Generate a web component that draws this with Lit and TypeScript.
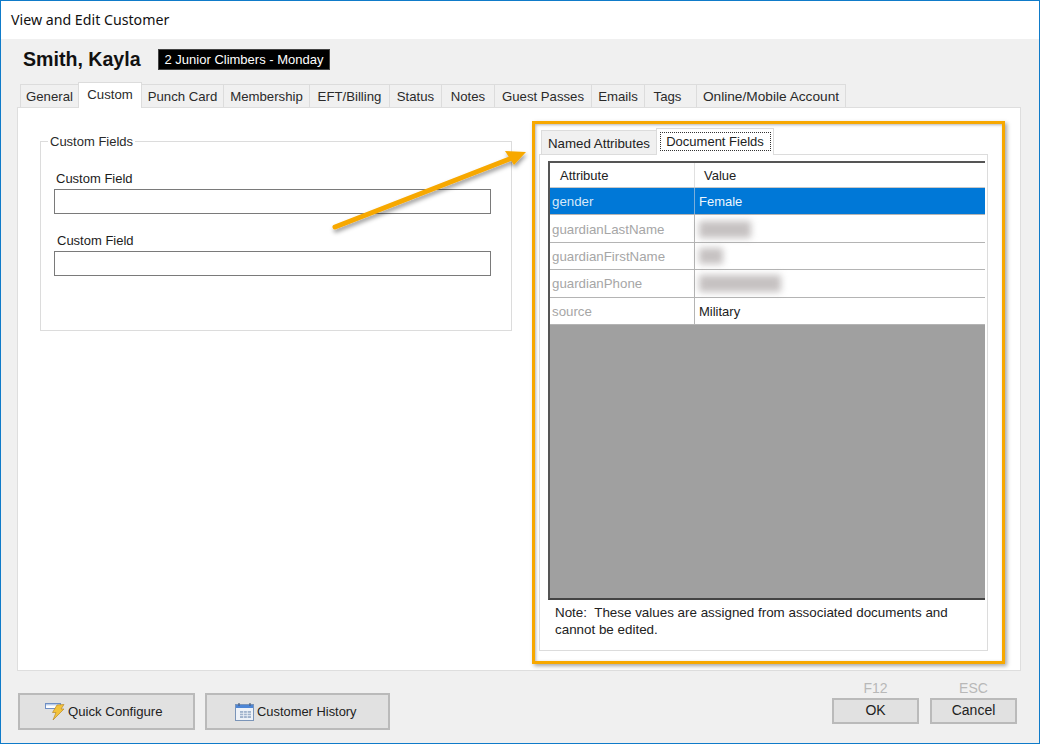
import { LitElement, html, css, svg } from "lit";
import { customElement } from "lit/decorators.js";

const TABS: [string, number][] = [
  ["General", 59], ["Custom", 63], ["Punch Card", 82], ["Membership", 86], ["EFT/Billing", 80],
  ["Status", 52], ["Notes", 53], ["Guest Passes", 97], ["Emails", 53], ["Tags", 52], ["Online/Mobile Account", 149],
];

const ROWS = [
  { a: "guardianLastName", w: 52, h: 17 },
  { a: "guardianFirstName", w: 24, h: 16 },
  { a: "guardianPhone", w: 82, h: 17 },
];

@customElement("app-root")
export class AppRoot extends LitElement {
  static styles = css`
    :host {
      display: block; position: relative; box-sizing: border-box; width: 1040px; height: 744px;
      border: 1px solid #0f7bc9; background: #f0f0f0; overflow: hidden;
      font-family: "Liberation Sans", Arial, sans-serif; font-size: 13px; color: #1c1c1c;
    }
    .title { height: 38px; background: #fff; display: flex; align-items: center; padding: 0 0 2px 10px; box-sizing: border-box;
      font-family: "Noto Sans", "Open Sans", sans-serif; font-size: 14.2px; color: #111; }
    .head { height: 45px; display: flex; align-items: center; padding: 0 0 4px 22px; box-sizing: border-box; }
    .name { font-size: 19.6px; font-weight: 700; color: #111; width: 135px; }
    .badge { background: #000; color: #fff; height: 21px; width: 172px; display: flex; align-items: center;
      justify-content: center; font-size: 13px; box-sizing: border-box; border: 1px solid #444; }
    .tabs { display: flex; height: 23px; margin-left: 19px; align-items: flex-end; }
    .tab { height: 23px; box-sizing: border-box; background: #f0f0f0; border: 1px solid #dcdcdc; border-bottom: 0; border-left-width: 0;
      display: flex; align-items: center; justify-content: center; font-size: 13.2px; color: #2a2a2a; }
    .tab:first-child { border-left-width: 1px; }
    .tab:nth-child(10) { padding-right: 6px; }
    .tab:nth-child(11) { font-size: 13.7px; }
    .tab.on { background: #fff; margin-bottom: -1px; height: 26px; position: relative; z-index: 1; padding: 0 0 3px; border-left-width: 1px; margin-left: -1px; }
    .panel { margin-left: 16px; width: 1004px; height: 564px; box-sizing: border-box; background: #fff; border: 1px solid #dedede;
      display: flex; padding: 33px 0 0 22px; }
    .group { width: 472px; height: 190px; box-sizing: border-box; border: 1px solid #dcdcdc; padding: 0 20px 0 13px; flex: none; }
    .legend { display: inline-block; background: #fff; margin: -9px 0 0 -6px; padding: 0 2px; line-height: 17px; height: 17px; vertical-align: top; color: #2a2a2a; }
    .field-label { line-height: 17px; margin: 13px 0 2px 2px; }
    .field { height: 25px; box-sizing: border-box; border: 1px solid #7a7a7a; background: #fff; }
    .field + .field-label { margin-top: 18px; margin-left: 3px; }
    .doc { width: 449px; height: 530px; margin: -13px 0 0 27px; flex: none; }
    .subtabs { display: flex; height: 26px; margin-left: 2px; align-items: flex-end; }
    .sub { height: 24px; box-sizing: border-box; border: 1px solid #dcdcdc; border-bottom: 0; background: #f0f0f0; display: flex; align-items: center; justify-content: center; width: 116px; color: #222; font-size: 13.3px; padding-top: 2px; }
    .sub.on { height: 27px; background: #fff; margin-bottom: -1px; width: 118px; margin-left: -1px; position: relative; z-index: 1; padding: 3px 0 0; align-items: flex-start; font-size: 13px; }
    .focus { border: 1px dotted #333; height: 19px; line-height: 17px; width: 111px; text-align: center; white-space: nowrap; box-sizing: border-box; }
    .subpanel { height: 497px; box-sizing: border-box; border: 1px solid #dcdcdc; background: #fff; padding: 6px 2px 0 8px; }
    .grid { height: 439px; box-sizing: border-box; border-top: 2px solid #555; border-left: 2px solid #555; border-bottom: 2px solid #444; background: #a0a0a0; }
    .row { display: grid; grid-template-columns: 145px 1fr; background: #fff; height: 27.4px; box-sizing: border-box; border-bottom: 1px solid #b4b4b4; align-items: center; }
    .row > div { height: 100%; box-sizing: border-box; display: flex; align-items: center; padding: 1px 0 0 4px; }
    .row > div:first-child { border-right: 1px solid #b4b4b4; color: #a6a6a6; padding-left: 2px; font-size: 13.3px; }
    .row.hd { height: 25px; border-bottom: 1px solid #c8c8c8; }
    .row.hd > div { color: #222; padding: 0 0 0 10px; border-right: 1px solid #e0e0e0; font-size: 13px; }
    .row.hd > div:last-child { border: 0; padding-left: 9px; }
    .row.sel { background: #0078d7; }
    .row.sel > div { color: #eef6fd; padding-top: 0; }
    .row.sel > div:first-child { color: #d8e9f8; border-right-color: #7aaedb; }
    .blur { background: #8d8585; filter: blur(3.5px); opacity: .5; }
    .note { margin: 4px 0 0 7px; line-height: 17px; color: #222; width: 420px; white-space: pre-wrap; font-size: 13.4px; }
    .foot { display: flex; padding: 0 22px 0 17px; height: 72px; box-sizing: border-box; }
    .btn { box-sizing: border-box; border: 2px solid #bababa; background: #e1e1e1; display: flex; align-items: center; justify-content: center; color: #222; font-size: 13.2px; }
    .big { height: 37px; margin-top: 22px; justify-content: flex-start; }
    .q { width: 177px; padding-left: 25px; }
    .h { width: 185px; margin-left: 10px; padding-left: 28px; gap: 2px; font-size: 12.9px; }
    .right { margin-left: auto; display: flex; gap: 11px; }
    .act { width: 87px; }
    .hint { text-align: center; color: #b8b8b8; line-height: 16px; margin: 9px 0 2px; font-size: 14px; }
    .act .btn { height: 26px; font-size: 14px; padding-bottom: 2px; }
    .mark { position: absolute; left: 531px; top: 120px; width: 473px; height: 543px; box-sizing: border-box; border: 3px solid #f7a800;
      box-shadow: 2px 2px 4px rgba(0,0,0,.35), inset 1px 1px 3px rgba(0,0,0,.3); pointer-events: none; }
    .arrow { position: absolute; left: 0; top: 0; width: 1040px; height: 744px; pointer-events: none; }
  `;

  private boltIcon() {
    return html`<svg width="23" height="22" viewBox="0 0 23 22">
      <rect x="0.5" y="2.5" width="15" height="5" fill="#fff" stroke="#6f8fc4"/>
      <rect x="1" y="3" width="14" height="1.4" fill="#b9cdea"/>
      <path d="M12 4 L19 3.5 L16 8 L19 8 L8 19 L11 11.5 L7.5 11.5 Z" fill="#f3c33b" stroke="#b98a2a" stroke-width=".7"/>
    </svg>`;
  }

  private calIcon() {
    return html`<svg width="20" height="20" viewBox="0 0 20 20">
      <rect x="0.5" y="2.5" width="18" height="16" fill="#eef2f8" stroke="#7a94b8"/>
      <rect x="1" y="3" width="17" height="3" fill="#4d86d6"/>
      <path d="M4 1v3M15 1v3" stroke="#4a5f80" stroke-width="1.2"/>
      <rect x="5" y="9" width="11" height="7" fill="#9fb2cc"/>
      <path d="M5 11.3h11M5 13.6h11M8.6 9v7M12.3 9v7" stroke="#eef2f8" stroke-width=".8"/>
    </svg>`;
  }

  render() {
    return html`
      <div class="title">View and Edit Customer</div>
      <div class="head">
        <div class="name">Smith, Kayla</div>
        <div class="badge">2 Junior Climbers - Monday</div>
      </div>
      <div class="tabs">
        ${TABS.map(([t, w]) => html`<div class="tab ${t === "Custom" ? "on" : ""}" style="width:${t === "Custom" ? w + 1 : w}px">${t}</div>`)}
      </div>
      <div class="panel">
        <div class="group">
          <span class="legend">Custom Fields</span>
          <div class="field-label">Custom Field</div>
          <div class="field"></div>
          <div class="field-label">Custom Field</div>
          <div class="field"></div>
        </div>
        <div class="doc">
          <div class="subtabs">
            <div class="sub">Named Attributes</div>
            <div class="sub on"><div class="focus">Document Fields</div></div>
          </div>
          <div class="subpanel">
            <div class="grid">
              <div class="row hd"><div>Attribute</div><div>Value</div></div>
              <div class="row sel"><div>gender</div><div>Female</div></div>
              ${ROWS.map(r => html`<div class="row"><div>${r.a}</div><div><span class="blur" style="width:${r.w}px;height:${r.h}px"></span></div></div>`)}
              <div class="row"><div>source</div><div>Military</div></div>
            </div>
            <div class="note">Note:  These values are assigned from associated documents and
cannot be edited.</div>
          </div>
        </div>
      </div>
      <div class="foot">
        <div class="btn big q">${this.boltIcon()}<span>Quick Configure</span></div>
        <div class="btn big h">${this.calIcon()}<span>Customer History</span></div>
        <div class="right">
          <div class="act"><div class="hint">F12</div><div class="btn">OK</div></div>
          <div class="act"><div class="hint">ESC</div><div class="btn">Cancel</div></div>
        </div>
      </div>
      <div class="mark"></div>
      <svg class="arrow" viewBox="0 0 1040 744">
        ${svg`<defs><filter id="s" x="-20%" y="-20%" width="140%" height="140%"><feDropShadow dx="1" dy="3" stdDeviation="2" flood-color="#000" flood-opacity=".4"/></filter></defs>
        <g filter="url(#s)" transform="translate(-1,-1)"><path d="M335 227 L512 158" stroke="#f7a800" stroke-width="5" stroke-linecap="round" fill="none"/>
        <path d="M526 152 L505 151 L514 165 Z" fill="#f7a800"/></g>`}
      </svg>
    `;
  }
}
